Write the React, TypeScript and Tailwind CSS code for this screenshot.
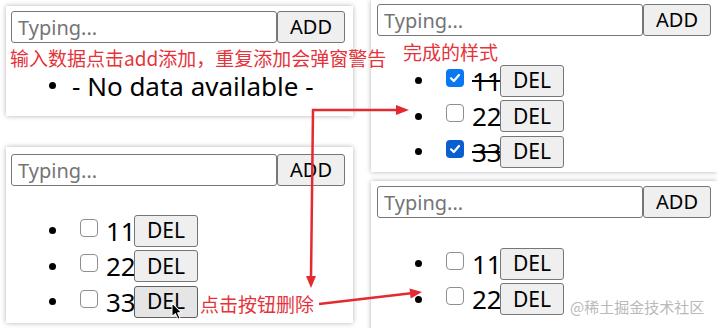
import React from "react";

const latin = "font-['Noto_Sans','Noto_Sans_CJK_SC',sans-serif]";
const cjk = "font-['Noto_Sans_CJK_SC','Noto_Sans',sans-serif]";

function InputRow() {
  return (
    <div className="flex">
      <input
        readOnly
        placeholder="Typing..."
        className="w-[266px] h-[32px] border border-[#767676] rounded-[3px] pl-[6px] text-[20px] text-black placeholder:text-[#757575] outline-none bg-white"
      />
      <button className="w-[68px] h-[32px] border border-[#767676] rounded-[3px] bg-[#efefef] text-[20px] text-black leading-none">
        ADD
      </button>
    </div>
  );
}

type CheckState = "off" | "on" | "onDark";

function Check({ state }: { state: CheckState }) {
  if (state === "off") {
    return (
      <span className="ml-[24px] mb-[6px] w-[18px] h-[18px] rounded-[4px] border border-[#8f8f8f] bg-white shrink-0" />
    );
  }
  return (
    <span
      className={
        state === "on"
          ? "ml-[24px] mb-[6px] w-[18px] h-[18px] rounded-[4px] bg-[#0b78f3] shrink-0 flex items-center justify-center"
          : "ml-[24px] mb-[6px] w-[18px] h-[18px] rounded-[4px] bg-[#0a5fcf] shrink-0 flex items-center justify-center"
      }
    >
      <svg width="12" height="12" viewBox="0 0 12 12">
        <path d="M2 6.3 L4.8 9 L10 3" stroke="white" strokeWidth="2.2" fill="none" strokeLinecap="round" strokeLinejoin="round" />
      </svg>
    </span>
  );
}

function Row({
  label,
  state = "off",
  done = false,
  hover = false,
}: {
  label: string;
  state?: CheckState;
  done?: boolean;
  hover?: boolean;
}) {
  return (
    <li className="flex items-center h-[35.5px]">
      <span className="ml-[38px] w-[7px] h-[7px] rounded-full bg-black shrink-0" />
      <Check state={state} />
      <span
        className={
          done
            ? "ml-[8px] w-[28px] text-[26px] leading-none text-black line-through whitespace-nowrap"
            : "ml-[8px] w-[28px] text-[26px] leading-none text-black whitespace-nowrap"
        }
      >
        {label}
      </span>
      <button
        className={
          hover
            ? "w-[64px] h-[32px] border border-[#5f5f5f] rounded-[3px] bg-[#e5e5e5] text-[21px] text-black leading-none"
            : "w-[64px] h-[32px] border border-[#767676] rounded-[3px] bg-[#efefef] text-[21px] text-black leading-none"
        }
      >
        DEL
      </button>
    </li>
  );
}

const panel = "absolute bg-white shadow-[0_0_5px_rgba(0,0,0,0.3)]";

export default function App() {
  return (
    <div className={`relative w-[717px] h-[328px] bg-white overflow-hidden ${latin}`}>
      {/* Panel 1 */}
      <div className={`${panel} left-[6px] top-[6px] w-[347px] h-[110px] pl-[5px] pt-[5px]`}>
        <InputRow />
        <ul className="mt-[25px]">
          <li className="flex items-center h-[35px]">
            <span className="ml-[38px] w-[7px] h-[7px] rounded-full bg-black shrink-0" />
            <span className="ml-[16px] text-[26px] leading-none text-black whitespace-nowrap">
              - No data available -
            </span>
          </li>
        </ul>
      </div>

      {/* Panel 2 */}
      <div className={`${panel} left-[371px] top-[0px] w-[346px] h-[172px] pl-[6px] pt-[4px]`}>
        <InputRow />
        <ul className="mt-[27px]">
          <Row label="11" state="on" done />
          <Row label="22" />
          <Row label="33" state="onDark" done />
        </ul>
      </div>

      {/* Panel 3 */}
      <div className={`${panel} left-[6px] top-[147px] w-[347px] h-[176px] pl-[5px] pt-[7px]`}>
        <InputRow />
        <ul className="mt-[27px]">
          <Row label="11" />
          <Row label="22" />
          <Row label="33" hover />
        </ul>
      </div>

      {/* Panel 4 */}
      <div className={`${panel} left-[371px] top-[181px] w-[346px] h-[160px] pl-[6px] pt-[5px]`}>
        <InputRow />
        <ul className="mt-[28px]">
          <Row label="11" />
          <Row label="22" />
        </ul>
      </div>

      {/* Annotations */}
      <div className={`absolute left-[10px] top-[45px] text-[19px] leading-[26px] text-[#e5333b] whitespace-nowrap ${cjk}`}>
        输入数据点击add添加，重复添加会弹窗警告
      </div>
      <div className={`absolute left-[403px] top-[39px] text-[19px] leading-[26px] text-[#e5333b] whitespace-nowrap ${cjk}`}>
        完成的样式
      </div>
      <div className={`absolute left-[200px] top-[291px] text-[19px] leading-[26px] text-[#e5333b] whitespace-nowrap ${cjk}`}>
        点击按钮删除
      </div>
      <div className={`absolute left-[570px] top-[297px] text-[15px] leading-[20px] text-[#b9b9b9] whitespace-nowrap ${cjk}`}>
        @稀土掘金技术社区
      </div>

      {/* Arrows */}
      <svg width="717" height="328" className="absolute left-0 top-0 pointer-events-none">
        <g stroke="#e42a31" strokeWidth="2.5" fill="none">
          <polyline points="311,278 313,110 398,110" />
          <line x1="319" y1="304" x2="411" y2="293.3" />
        </g>
        <g fill="#e42a31">
          <polygon points="409,110 396,105 396,115" />
          <polygon points="311,288 306,276 316,276" />
          <polygon points="422,292 410.7,298.4 409.5,288.4" />
        </g>
        {/* mouse cursor */}
        <g transform="translate(172,303) scale(0.85)">
          <path
            d="M0 0 L0 16 L4 12.5 L7 19 L9.5 18 L6.6 11.6 L11.5 11.6 Z"
            fill="black"
            stroke="white"
            strokeWidth="1.2"
            strokeLinejoin="round"
          />
        </g>
      </svg>
    </div>
  );
}
